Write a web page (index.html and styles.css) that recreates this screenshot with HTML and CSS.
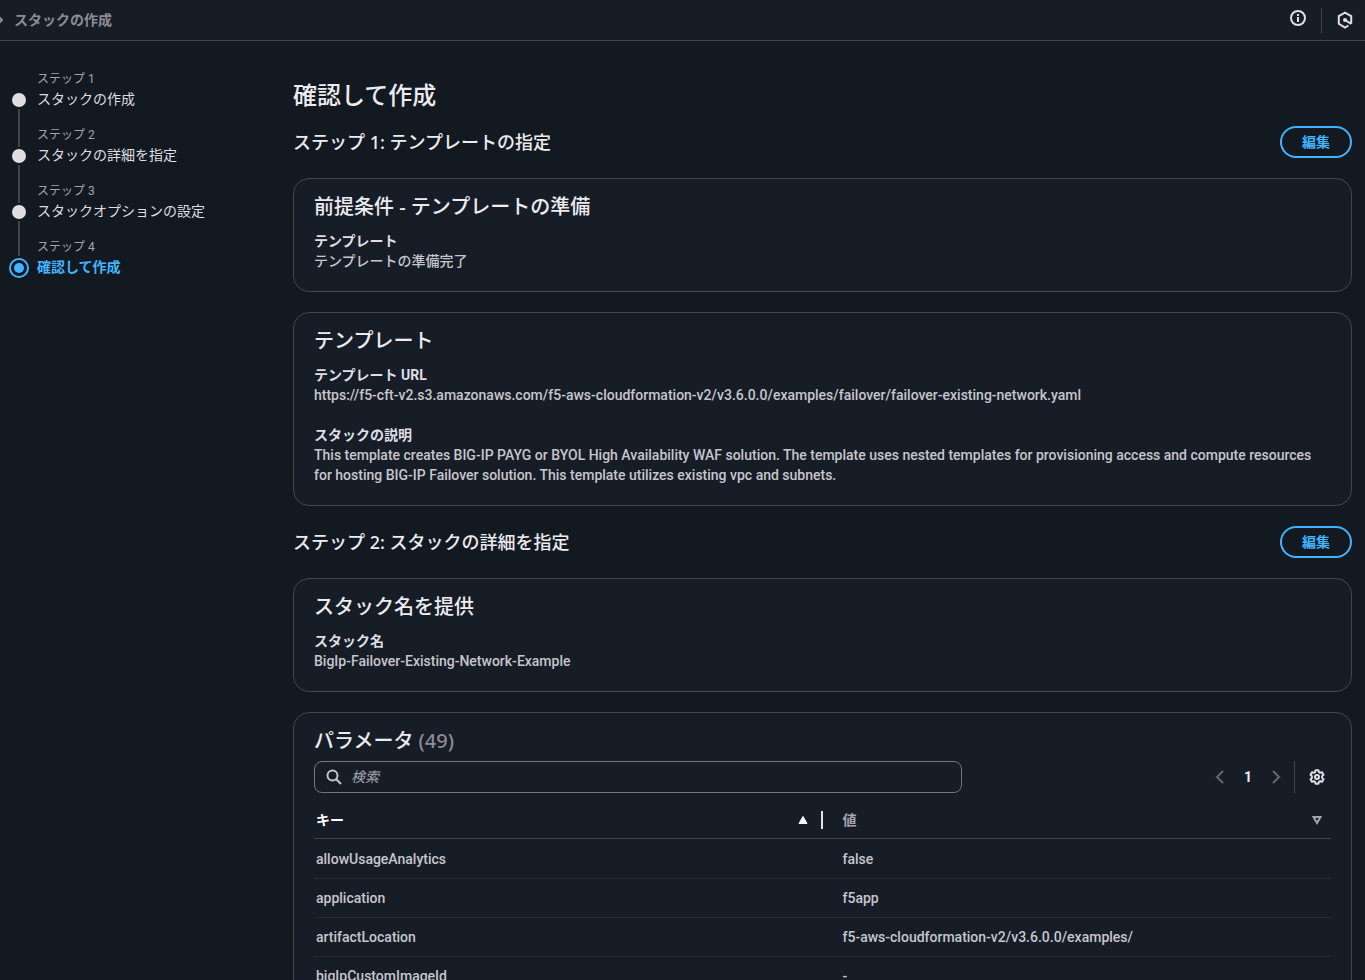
FILE: index.html
```html
<!DOCTYPE html>
<html lang="ja">

<head>
  <meta charset="UTF-8">
  <meta name="viewport" content="width=device-width, initial-scale=1.0">
  <title>スタックの作成</title>
  <link rel="stylesheet" href="styles.css">
</head>

<body>
  <header class="topbar">
    <nav class="breadcrumb" aria-label="パンくず">
      <svg class="crumb-arrow" width="4" height="12" viewBox="0 0 4 12" fill="none" stroke="currentColor" stroke-width="2">
        <path d="M-2 2l4 4-4 4"></path>
      </svg>
      <span>スタックの作成</span>
    </nav>
    <div class="topbar-tools">
      <button class="icon-btn" aria-label="情報">
        <svg width="18" height="18" viewBox="0 0 18 18" fill="none" stroke="currentColor" stroke-width="2">
          <circle cx="9" cy="9" r="7"></circle>
          <path d="M9 8v5M9 5v2"></path>
        </svg>
      </button>
      <span class="tools-divider"></span>
      <button class="icon-btn icon-btn-low" aria-label="アシスタント">
        <svg width="16" height="18" viewBox="0 0 16 18" fill="none" stroke="currentColor" stroke-width="2">
          <path d="M11.500 14.500L8 16.500 1.800 12.800V5.200L8 1.600l6.200 3.600v7.600"></path>
          <path d="M8 9l6.200 3.800"></path>
          <circle cx="8" cy="9" r="2" fill="currentColor" stroke="none"></circle>
        </svg>
      </button>
    </div>
  </header>

  <div class="layout">
    <nav class="steps" aria-label="ステップ">
      <ol>
        <li class="step">
          <span class="marker"><i class="line line-top"></i><i class="dot"></i><i class="line line-bottom"></i></span>
          <div>
            <p class="step-label">ステップ 1</p>
            <a href="#" class="step-name">スタックの作成</a>
          </div>
        </li>
        <li class="step">
          <span class="marker"><i class="line line-top"></i><i class="dot"></i><i class="line line-bottom"></i></span>
          <div>
            <p class="step-label">ステップ 2</p>
            <a href="#" class="step-name">スタックの詳細を指定</a>
          </div>
        </li>
        <li class="step">
          <span class="marker"><i class="line line-top"></i><i class="dot"></i><i class="line line-bottom"></i></span>
          <div>
            <p class="step-label">ステップ 3</p>
            <a href="#" class="step-name">スタックオプションの設定</a>
          </div>
        </li>
        <li class="step active">
          <span class="marker"><i class="line line-top"></i><i class="dot"></i></span>
          <div>
            <p class="step-label">ステップ 4</p>
            <a href="#" class="step-name" aria-current="step">確認して作成</a>
          </div>
        </li>
      </ol>
    </nav>

    <main class="content">
      <h1>確認して作成</h1>

      <div class="section-header">
        <h2>ステップ 1: テンプレートの指定</h2>
        <button class="edit-btn">編集</button>
      </div>

      <section class="card">
        <h3>前提条件 - テンプレートの準備</h3>
        <dl>
          <dt>テンプレート</dt>
          <dd>テンプレートの準備完了</dd>
        </dl>
      </section>

      <section class="card">
        <h3>テンプレート</h3>
        <dl>
          <dt>テンプレート URL</dt>
          <dd>https://f5-cft-v2.s3.amazonaws.com/f5-aws-cloudformation-v2/v3.6.0.0/examples/failover/failover-existing-network.yaml</dd>
          <dt>スタックの説明</dt>
          <dd>This template creates BIG-IP PAYG or BYOL High Availability WAF solution. The template uses nested templates for provisioning access and compute resources for hosting BIG-IP Failover solution. This template utilizes existing vpc and subnets.</dd>
        </dl>
      </section>

      <div class="section-header">
        <h2>ステップ 2: スタックの詳細を指定</h2>
        <button class="edit-btn">編集</button>
      </div>

      <section class="card">
        <h3>スタック名を提供</h3>
        <dl>
          <dt>スタック名</dt>
          <dd>BigIp-Failover-Existing-Network-Example</dd>
        </dl>
      </section>

      <section class="card">
        <h3>パラメータ <span class="count">(49)</span></h3>
        <div class="table-tools">
          <label class="search">
            <svg width="16" height="16" viewBox="0 0 16 16" fill="none" stroke="currentColor" stroke-width="2">
              <circle cx="6.500" cy="6.500" r="5"></circle>
              <path d="M10 10l5 5"></path>
            </svg>
            <input type="search" placeholder="検索" aria-label="検索">
          </label>
          <div class="pagination">
            <button class="page-arrow" aria-label="前のページ" disabled>
              <svg width="16" height="16" viewBox="0 0 16 16" fill="none" stroke="currentColor" stroke-width="2">
                <path d="M11 2L5 8l6 6"></path>
              </svg>
            </button>
            <button class="page-number">1</button>
            <button class="page-arrow" aria-label="次のページ" disabled>
              <svg width="16" height="16" viewBox="0 0 16 16" fill="none" stroke="currentColor" stroke-width="2">
                <path d="M5 2l6 6-6 6"></path>
              </svg>
            </button>
            <button class="settings" aria-label="設定">
              <svg width="16" height="16" viewBox="0 0 16 16" fill="none" stroke="currentColor" stroke-width="2" stroke-linejoin="round">
                <path d="M6.600 1.200h2.800l.5 1.900 1.300.7 1.900-.5 1.400 2.400L13.100 7.100v1.800l1.400 1.400-1.400 2.400-1.900-.5-1.300.7-.5 1.900H6.600l-.5-1.900-1.300-.7-1.900.5-1.400-2.400 1.400-1.400V7.100L1.500 5.700l1.400-2.400 1.900.5 1.300-.7z"></path>
                <circle cx="8" cy="8" r="2"></circle>
              </svg>
            </button>
          </div>
        </div>

        <table>
          <thead>
            <tr>
              <th class="sorted" aria-sort="ascending">
                <div class="th-inner">
                  <span>キー</span>
                  <svg width="12" height="12" viewBox="0 0 12 12"><path d="M6 2.500l4 7H2z" fill="currentColor" stroke="currentColor" stroke-linejoin="round"></path></svg>
                </div>
              </th>
              <th>
                <div class="th-inner">
                  <span>値</span>
                  <svg width="12" height="12" viewBox="0 0 12 12"><path d="M2.500 3h7L6 9z" fill="none" stroke="currentColor" stroke-width="2"></path></svg>
                </div>
              </th>
            </tr>
          </thead>
          <tbody>
            <tr>
              <td>allowUsageAnalytics</td>
              <td>false</td>
            </tr>
            <tr>
              <td>application</td>
              <td>f5app</td>
            </tr>
            <tr>
              <td>artifactLocation</td>
              <td>f5-aws-cloudformation-v2/v3.6.0.0/examples/</td>
            </tr>
            <tr>
              <td>bigIpCustomImageId</td>
              <td>-</td>
            </tr>
          </tbody>
        </table>
      </section>
    </main>
  </div>
</body>

</html>
```
FILE: styles.css
```css
:root {
  --page: #131920;
  --panel: #171d27;
  --border: #424650;
  --border-input: #72747e;
  --row-border: #232b37;
  --heading: #ebebf0;
  --label: #dedee3;
  --text: #c6c6cd;
  --muted: #a4a4ad;
  --dim: #8c8c94;
  --disabled: #656871;
  --blue: #42b4ff;
}

* {
  margin: 0;
  padding: 0;
  box-sizing: border-box;
}

body {
  background-color: var(--page);
  color: var(--text);
  font-family: Roboto, "Noto Sans CJK JP", sans-serif;
  font-size: 14px;
  line-height: 20px;
}

button,
input {
  font: inherit;
  color: inherit;
  background: none;
  border: none;
}

button {
  cursor: pointer;
}

svg {
  display: block;
}

.topbar {
  display: flex;
  justify-content: space-between;
  align-items: center;
  height: 41px;
  padding-right: 12px;
  background-color: var(--panel);
  border-bottom: 1px solid var(--border);
}

.breadcrumb {
  display: flex;
  align-items: center;
  gap: 10px;
  color: var(--dim);
  font-weight: 700;
}

.topbar-tools {
  display: flex;
  align-items: center;
  gap: 14px;
  color: var(--label);
}

.icon-btn {
  padding-bottom: 4px;
}

.icon-btn-low {
  padding: 0 0 0 1px;
}

.tools-divider {
  width: 1px;
  height: 25px;
  background-color: var(--border);
}

.layout {
  display: grid;
  grid-template-columns: 284px minmax(0, 1fr);
  padding: 0 13px 20px 9px;
}

.steps {
  padding-top: 28px;
}

.steps ol {
  list-style: none;
}

.step {
  display: flex;
  gap: 8px;
  min-height: 56px;
}

.marker {
  display: flex;
  flex-direction: column;
  align-items: center;
  gap: 2px;
  width: 20px;
}

.line {
  width: 2px;
  background-color: var(--border);
}

.line-top {
  height: 22px;
}

.line-bottom {
  flex: 1;
}

.step:first-child .line-top {
  background: none;
}

.dot {
  width: 14px;
  height: 14px;
  border-radius: 50%;
  background-color: var(--label);
}

.step-label {
  color: var(--muted);
  font-size: 12px;
}

.step-name {
  display: block;
  color: var(--label);
  text-decoration: none;
}

.active .line-top {
  height: 19px;
}

.active .dot {
  width: 20px;
  height: 20px;
  border: 2px solid var(--blue);
  padding: 3px;
  background-color: var(--blue);
  background-clip: content-box;
}

.active .step-name {
  color: var(--blue);
  font-weight: 700;
}

.content {
  padding-top: 39px;
}

h1,
h2,
h3 {
  color: var(--heading);
  font-family: "Noto Sans", "Noto Sans CJK JP", sans-serif;
  font-weight: 500;
}

h1 {
  font-size: 24px;
  line-height: 30px;
  margin-bottom: 16px;
}

h2 {
  font-size: 18px;
  line-height: 24px;
}

h3 {
  font-size: 20px;
  line-height: 24px;
}

.count {
  color: var(--dim);
}

.section-header {
  display: flex;
  justify-content: space-between;
  align-items: center;
  margin-bottom: 20px;
}

.edit-btn {
  height: 32px;
  padding: 0 20px;
  border: 2px solid var(--blue);
  border-radius: 20px;
  color: var(--blue);
  font-weight: 700;
}

.card {
  padding: 16px 20px 20px;
  margin-bottom: 20px;
  background-color: var(--panel);
  border: 1px solid var(--border);
  border-radius: 16px;
}

dl {
  margin-top: 12px;
}

dt {
  color: var(--label);
  font-weight: 700;
}

dd,
td {
  font-weight: 500;
}

dd + dt {
  margin-top: 20px;
}

.table-tools {
  display: flex;
  justify-content: space-between;
  align-items: center;
  margin-top: 8px;
}

.search {
  display: flex;
  align-items: center;
  gap: 9px;
  flex: 0 1 648px;
  height: 32px;
  padding: 0 11px;
  border: 1px solid var(--border-input);
  border-radius: 8px;
}

.search input {
  flex: 1;
  min-width: 0;
  outline: none;
}

.search input::placeholder {
  color: var(--muted);
  font-style: italic;
}

.pagination {
  display: flex;
  align-items: center;
}

.page-arrow {
  width: 28px;
  padding: 0 6px;
  color: var(--disabled);
}

.page-number {
  width: 28px;
  color: var(--heading);
  font-weight: 700;
}

.settings {
  height: 32px;
  margin-left: 4px;
  padding: 0 6px 0 14px;
  border-left: 1px solid var(--border);
  color: var(--label);
}

table {
  width: 100%;
  margin-top: 9px;
  table-layout: fixed;
  border-collapse: separate;
  border-spacing: 0;
}

th {
  padding: 9px 8px 9px 20px;
  border-bottom: 1px solid var(--border);
  color: var(--muted);
  text-align: left;
}

.th-inner {
  display: flex;
  justify-content: space-between;
  align-items: center;
  line-height: 18px;
}

.sorted {
  padding: 9px 0 9px 2px;
  color: #fff;
}

.sorted .th-inner {
  padding-right: 12px;
  border-right: 2px solid var(--label);
}

td {
  height: 39px;
  padding: 0 20px;
  border-bottom: 1px solid var(--row-border);
}

td:first-child {
  padding-left: 2px;
}

tbody tr:first-child td {
  height: 40px;
  border-top: 1px solid transparent;
}
```
